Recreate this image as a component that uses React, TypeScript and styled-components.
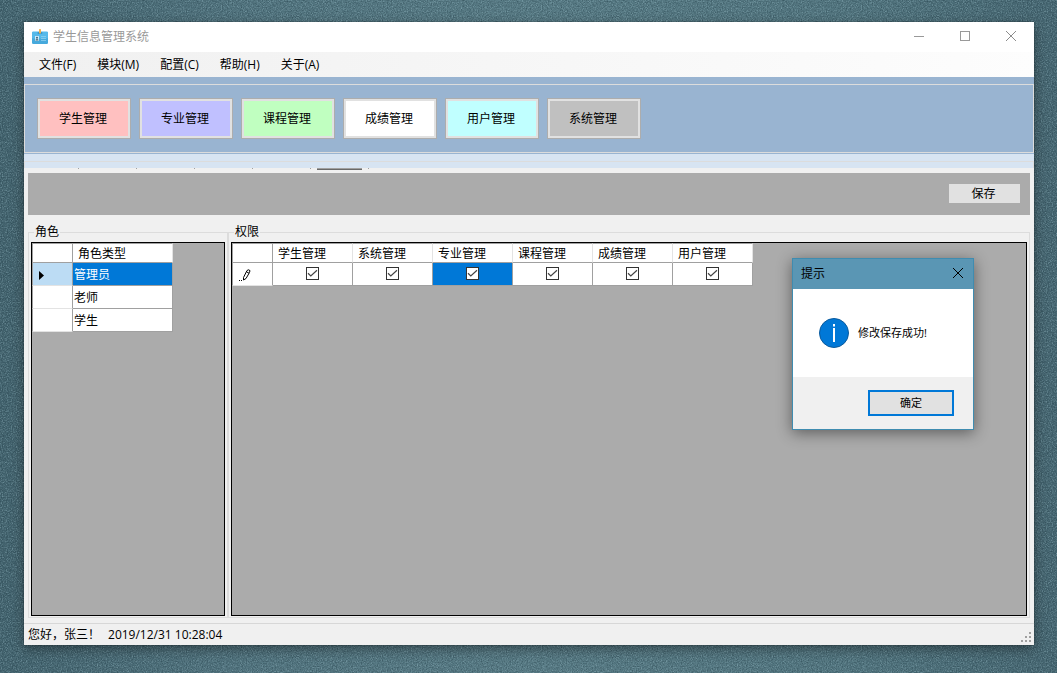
import React from "react";
import styled, { createGlobalStyle } from "styled-components";

const Global = createGlobalStyle`
  *, *::before, *::after { box-sizing: border-box; }
  body {
    margin: 0;
    background: #4c6f7c;
    font-family: "Open Sans", "Noto Sans CJK SC", sans-serif;
    font-size: 12px;
    line-height: 16px;
    color: #000;
  }
  button, input { font: inherit; color: inherit; }
`;

const Desktop = styled.div`
  position: relative;
  display: flex;
  min-height: 100vh;
  padding: 22px 23px 28px 24px;
  background: linear-gradient(90deg, #3f5f6a 0%, #4d6f7a 20%, #55788a 20%, #557883 50%, #50737d 80%, #43636e 100%);
  background: linear-gradient(90deg, #40606b 0%, #4f717c 22%, #567983 50%, #50737d 80%, #43636e 100%);
`;

const Texture = styled.svg`
  position: absolute;
  inset: 0;
  width: 100%;
  height: 100%;
`;

const Window = styled.main`
  position: relative;
  flex: 1;
  min-width: 0;
  display: flex;
  flex-direction: column;
  background: #f0f0f0;
  box-shadow: 0 0 1px rgba(0, 0, 0, 0.6), 0 4px 12px rgba(0, 0, 0, 0.4);
`;

const TitleBar = styled.header`
  display: flex;
  align-items: center;
  height: 30px;
  padding-left: 8px;
  background: #fff;
  color: #999;
`;

const Title = styled.h1`
  flex: 1;
  margin: 0 0 0 5px;
  font-size: 12px;
  font-weight: 400;
`;

const CaptionButton = styled.button`
  display: grid;
  place-items: center;
  width: 46px;
  height: 30px;
  padding: 0 0 2px;
  border: 0;
  background: transparent;
`;

const MenuBar = styled.nav`
  display: flex;
  align-items: center;
  gap: 21px;
  height: 25px;
  padding-left: 15px;
  background: linear-gradient(90deg, #f0f0f0, #fdfdfd);
`;

const MenuItem = styled.button`
  padding: 0;
  border: 0;
  background: transparent;
`;

const Ribbon = styled.section`
  padding: 7px 0 1px;
  background: #99b4d1;
`;

const RibbonGroup = styled.div`
  display: flex;
  gap: 8px;
  padding: 13px 12px;
  border: 1px solid #dcdcdc;
`;

const ModuleButton = styled.button<{ $color: string }>`
  width: 94px;
  height: 41px;
  padding: 0 2px 0 0;
  border: 1px solid #adadad;
  box-shadow: inset 0 0 0 2px #e1e1e1;
  background: ${(p) => p.$color};
`;

const SubStrip = styled.div`
  height: 14px;
  padding-top: 7px;
  background: #d7e4f2;
`;

const SubStripGroup = styled.div`
  height: 7px;
  border: 1px solid #dcdcdc;
  border-bottom: 0;
`;

const TabEdges = styled.div`
  display: flex;
  height: 5px;
  padding-right: 4px;
`;

const TabEdge = styled.span<{ $first?: boolean }>`
  width: ${(p) => (p.$first ? 55 : 58)}px;
  height: 1px;
  border-right: 1px solid #a0a0a0;
`;

const ActiveTabEdge = styled(TabEdge)`
  padding: 0 6px;

  &::before {
    content: "";
    display: block;
    height: 2px;
    border-top: 1px solid #a0a0a0;
    background: #696969;
  }
`;

const ActionBar = styled.div`
  display: flex;
  justify-content: flex-end;
  align-items: flex-start;
  height: 42px;
  margin: 0 4px;
  padding: 11px 10px 0 0;
  background: #ababab;
`;

const SaveButton = styled.button`
  width: 71px;
  height: 19px;
  padding: 0 2px 0 0;
  line-height: 18px;
  border: 0;
  background: #e1e1e1;
`;

const Workspace = styled.div`
  flex: 1;
  display: flex;
  padding: 8px 4px 5px;
`;

const Group = styled.fieldset<{ $fixed?: boolean }>`
  display: flex;
  flex: ${(p) => (p.$fixed ? "0 0 200px" : "1")};
  min-width: 0;
  margin: 0;
  padding: 1px 2px;
  border: 1px solid #dcdcdc;
`;

const Legend = styled.legend`
  margin-left: 3px;
  padding: 0 1px;
  line-height: 18px;
`;

const GridPanel = styled.div`
  flex: 1;
  border: 1px solid #000;
  background: #ababab;
`;

const DataGrid = styled.table<{ $width: number }>`
  width: ${(p) => p.$width}px;
  table-layout: fixed;
  border-collapse: separate;
  border-spacing: 0;
`;

const ColumnHead = styled.th<{ $width?: number; $corner?: boolean }>`
  width: ${(p) => p.$width}px;
  height: 20px;
  padding: 2px 0 0 5px;
  border-top: 1px solid #a0a0a0;
  border-right: 1px solid ${(p) => (p.$corner ? "#a0a0a0" : "#e3e3e3")};
  border-left: ${(p) => (p.$corner ? "1px solid #a0a0a0" : "0")};
  border-bottom: 1px solid #a0a0a0;
  background: #fff;
  text-align: left;
  font-weight: 400;
  line-height: 16px;
`;

const RowHead = styled.th<{ $active?: boolean }>`
  height: 23px;
  padding: 2px 0 0 6px;
  border: 1px solid #a0a0a0;
  border-top: 0;
  border-bottom-color: #e3e3e3;
  background: ${(p) => (p.$active ? "#bcdcf4" : "#fff")};
  text-align: left;

  svg { display: block; }
`;

const Cell = styled.td<{ $selected?: boolean; $center?: boolean }>`
  height: 23px;
  padding: ${(p) => (p.$center ? "0 0 1px" : "2px 0 0 1px")};
  border-right: 1px solid #a0a0a0;
  border-bottom: 1px solid #a0a0a0;
  background: ${(p) => (p.$selected ? "#0078d7" : "#fff")};
  color: ${(p) => (p.$selected ? "#fff" : "#000")};
`;

const CheckWrap = styled.label`
  display: grid;
  width: 13px;
  height: 13px;
  margin: 0 auto;

  input, svg { grid-area: 1 / 1; }
  input:not(:checked) + svg { display: none; }
  svg { pointer-events: none; position: relative; }
`;

const CheckInput = styled.input`
  appearance: none;
  width: 13px;
  height: 13px;
  margin: 0;
  border: 1px solid #333;
  background: #fff;
`;

const StatusBar = styled.footer`
  display: flex;
  align-items: center;
  gap: 8px;
  height: 22px;
  padding: 0 2px 0 4px;
  border-top: 1px solid #d7d7d7;
`;

const Grip = styled.svg`
  margin-left: auto;
  align-self: flex-end;
`;

const Dialog = styled.section`
  position: absolute;
  top: 236px;
  right: 60px;
  width: 182px;
  border: 1px solid #3f8cb0;
  background: #fff;
  box-shadow: 0 3px 14px rgba(0, 0, 0, 0.45);
`;

const DialogTitle = styled.header`
  display: flex;
  align-items: center;
  justify-content: space-between;
  height: 30px;
  padding-left: 8px;
  background: #5a96b4;
`;

const DialogClose = styled.button`
  display: grid;
  place-items: center;
  width: 30px;
  height: 30px;
  padding: 0 0 2px;
  border: 0;
  background: transparent;
`;

const DialogBody = styled.div`
  display: flex;
  align-items: center;
  gap: 9px;
  height: 88px;
  padding-left: 26px;
  font-size: 11px;
`;

const Message = styled.p`
  margin: 0;
`;

const DialogFooter = styled.div`
  display: flex;
  justify-content: flex-end;
  height: 52px;
  padding: 13px 19px;
  background: #f0f0f0;
`;

const OkButton = styled.button`
  width: 86px;
  height: 26px;
  padding: 0;
  border: 2px solid #0078d7;
  background: #e1e1e1;
  font-size: 11px;
`;

const menus = ["文件(F)", "模块(M)", "配置(C)", "帮助(H)", "关于(A)"];

const modules = [
  { label: "学生管理", color: "#ffc0c0" },
  { label: "专业管理", color: "#c0c0ff" },
  { label: "课程管理", color: "#c0ffc0" },
  { label: "成绩管理", color: "#ffffff" },
  { label: "用户管理", color: "#c0ffff" },
  { label: "系统管理", color: "#c0c0c0" },
];

const roles = ["管理员", "老师", "学生"];

const permissions = ["学生管理", "系统管理", "专业管理", "课程管理", "成绩管理", "用户管理"];

const CrossIcon = ({ color, size }: { color: string; size: number }) => (
  <svg width={size} height={size} viewBox={`0 0 ${size} ${size}`} stroke={color}>
    <path d={`M0 0 ${size} ${size}M${size} 0 0 ${size}`} />
  </svg>
);

const AppIcon = () => (
  <svg width="16" height="16" viewBox="0 0 16 16">
    <rect x="0" y="3" width="16" height="12" rx="1.2" fill="#46a9dc" />
    <rect x="0" y="2.5" width="16" height="7" rx="1.2" fill="#55b9ea" />
    <rect x="5.5" y="3" width="5" height="2" rx="1" fill="#3b97cb" />
    <rect x="7" y="0" width="2" height="4.4" rx="0.6" fill="#f5b04c" />
    <rect x="3" y="7" width="4" height="5" fill="#cdeafa" />
    <circle cx="5" cy="8.8" r="1" fill="#3f6579" />
    <path d="M3.4 11.6q0-1.6 1.6-1.6t1.6 1.6z" fill="#3f6579" />
    <path d="M9 7.5h5M9 9.5h5M9 11.5h5" stroke="#8fd0f0" strokeWidth="0.8" />
  </svg>
);

export default function App() {
  return (
    <>
      <Global />
      <Desktop>
        <Texture aria-hidden="true">
          <filter id="grain" x="0" y="0" width="100%" height="100%" colorInterpolationFilters="sRGB">
            <feTurbulence type="fractalNoise" baseFrequency="0.8" numOctaves="2" seed="4" />
            <feColorMatrix
              type="matrix"
              values="0 0 0 0 0.6  0 0 0 0 0.74  0 0 0 0 0.78  1.1 0 0 0 -0.45"
            />
          </filter>
          <filter id="shade" x="0" y="0" width="100%" height="100%" colorInterpolationFilters="sRGB">
            <feTurbulence type="fractalNoise" baseFrequency="0.8" numOctaves="2" seed="9" />
            <feColorMatrix
              type="matrix"
              values="0 0 0 0 0.14  0 0 0 0 0.24  0 0 0 0 0.28  1.1 0 0 0 -0.45"
            />
          </filter>
          <rect width="100%" height="100%" filter="url(#grain)" />
          <rect width="100%" height="100%" filter="url(#shade)" />
        </Texture>

        <Window>
          <TitleBar>
            <AppIcon />
            <Title>学生信息管理系统</Title>
            <CaptionButton aria-label="最小化">
              <svg width="10" height="10" viewBox="0 0 10 10" stroke="#999">
                <path d="M0 5.5h10" />
              </svg>
            </CaptionButton>
            <CaptionButton aria-label="最大化">
              <svg width="10" height="10" viewBox="0 0 10 10" fill="none" stroke="#999">
                <rect x="0.5" y="0.5" width="9" height="9" />
              </svg>
            </CaptionButton>
            <CaptionButton aria-label="关闭">
              <CrossIcon color="#8c8c8c" size={10} />
            </CaptionButton>
          </TitleBar>

          <MenuBar>
            {menus.map((label) => (
              <MenuItem key={label}>{label}</MenuItem>
            ))}
          </MenuBar>

          <Ribbon>
            <RibbonGroup>
              {modules.map((m) => (
                <ModuleButton key={m.label} $color={m.color}>
                  {m.label}
                </ModuleButton>
              ))}
            </RibbonGroup>
          </Ribbon>

          <SubStrip>
            <SubStripGroup />
          </SubStrip>
          <TabEdges>
            <TabEdge $first />
            <TabEdge />
            <TabEdge />
            <TabEdge />
            <TabEdge />
            <ActiveTabEdge />
          </TabEdges>

          <ActionBar>
            <SaveButton>保存</SaveButton>
          </ActionBar>

          <Workspace>
            <Group $fixed>
              <Legend>角色</Legend>
              <GridPanel>
                <DataGrid $width={141}>
                  <thead>
                    <tr>
                      <ColumnHead $width={41} $corner />
                      <ColumnHead $width={100}>角色类型</ColumnHead>
                    </tr>
                  </thead>
                  <tbody>
                    {roles.map((role, i) => (
                      <tr key={role}>
                        <RowHead $active={i === 0}>
                          {i === 0 && (
                            <svg width="6" height="9" viewBox="0 0 6 9">
                              <path d="M0 0v9L5 4.5z" />
                            </svg>
                          )}
                        </RowHead>
                        <Cell $selected={i === 0}>{role}</Cell>
                      </tr>
                    ))}
                  </tbody>
                </DataGrid>
              </GridPanel>
            </Group>

            <Group>
              <Legend>权限</Legend>
              <GridPanel>
                <DataGrid $width={521}>
                  <thead>
                    <tr>
                      <ColumnHead $width={41} $corner />
                      {permissions.map((name, i) => (
                        <ColumnHead key={name} $width={80} id={`perm-${i}`}>
                          {name}
                        </ColumnHead>
                      ))}
                    </tr>
                  </thead>
                  <tbody>
                    <tr>
                      <RowHead>
                        <svg width="12" height="12" viewBox="0 0 12 12" fill="none" stroke="#000">
                          <path d="M0 11.5h1M2 11.5h1" />
                          <path d="M4.5 11V8.5L8 1.5 9.5 0.8 11 1.6 10.5 3.5 7 9.5 4.5 11M7.5 2.8 10 4.2" />
                        </svg>
                      </RowHead>
                      {permissions.map((name, i) => (
                        <Cell key={name} $center $selected={i === 2}>
                          <CheckWrap>
                            <CheckInput type="checkbox" defaultChecked aria-labelledby={`perm-${i}`} />
                            <svg width="13" height="13" viewBox="0 0 13 13" fill="none" stroke="#444" strokeWidth="1.2">
                              <path d="M2 6.3 4.8 9 11 3.2" />
                            </svg>
                          </CheckWrap>
                        </Cell>
                      ))}
                    </tr>
                  </tbody>
                </DataGrid>
              </GridPanel>
            </Group>
          </Workspace>

          <StatusBar>
            <span>您好，张三！</span>
            <time>2019/12/31 10:28:04</time>
            <Grip width="11" height="13" viewBox="0 0 11 13" fill="#a0a0a0">
              <path d="M8 0h2v2h-2zM4 4h2v2h-2zM8 4h2v2h-2zM0 8h2v2h-2zM4 8h2v2h-2zM8 8h2v2h-2z" />
            </Grip>
          </StatusBar>

          <Dialog role="dialog" aria-labelledby="dialog-title">
            <DialogTitle>
              <span id="dialog-title">提示</span>
              <DialogClose aria-label="关闭">
                <CrossIcon color="#000" size={10} />
              </DialogClose>
            </DialogTitle>
            <DialogBody>
              <svg width="30" height="30" viewBox="0 0 30 30">
                <circle cx="15" cy="15" r="14.5" fill="#0078d7" stroke="#0b5a9c" />
                <path d="M14 6h2v2.4h-2zM14 10h2v14h-2z" fill="#fff" />
              </svg>
              <Message>修改保存成功!</Message>
            </DialogBody>
            <DialogFooter>
              <OkButton>确定</OkButton>
            </DialogFooter>
          </Dialog>
        </Window>
      </Desktop>
    </>
  );
}
